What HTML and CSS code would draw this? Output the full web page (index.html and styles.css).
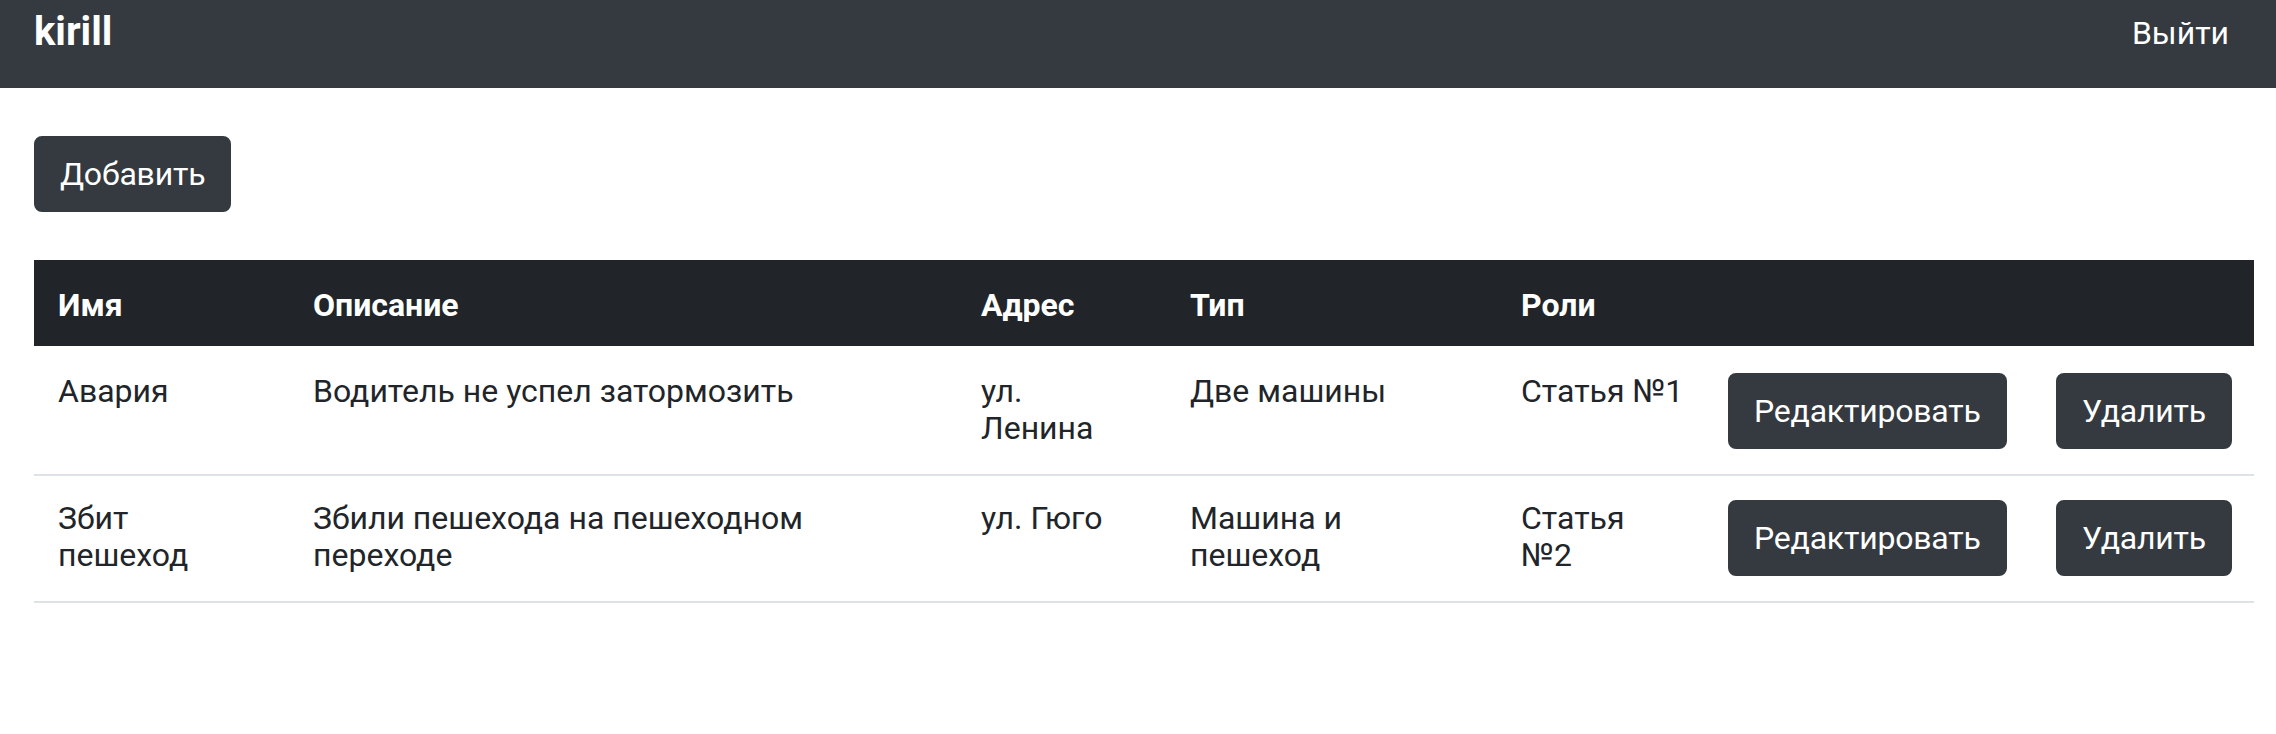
FILE: index.html
```html
<!DOCTYPE html>
<html lang="ru">
<head>
<meta charset="utf-8">
<title>kirill</title>
<link rel="stylesheet" href="styles.css">
</head>
<body>
<nav class="navbar">
  <a class="brand" href="#">kirill</a>
  <a class="nav-link" href="#">Выйти</a>
</nav>
<main class="content">
  <button class="btn">Добавить</button>
  <table class="table">
    <colgroup>
      <col class="c-name">
      <col class="c-desc">
      <col class="c-addr">
      <col class="c-type">
      <col class="c-role">
      <col class="c-edit">
      <col class="c-del">
    </colgroup>
    <thead>
      <tr>
        <th>Имя</th>
        <th>Описание</th>
        <th>Адрес</th>
        <th>Тип</th>
        <th>Роли</th>
        <th></th>
        <th></th>
      </tr>
    </thead>
    <tbody>
      <tr>
        <td>Авария</td>
        <td>Водитель не успел затормозить</td>
        <td>ул. Ленина</td>
        <td>Две машины</td>
        <td>Статья&nbsp;№1</td>
        <td><button class="btn">Редактировать</button></td>
        <td><button class="btn">Удалить</button></td>
      </tr>
      <tr>
        <td>Збит пешеход</td>
        <td>Збили пешехода на пешеходном переходе</td>
        <td>ул. Гюго</td>
        <td>Машина и пешеход</td>
        <td>Статья №2</td>
        <td><button class="btn">Редактировать</button></td>
        <td><button class="btn">Удалить</button></td>
      </tr>
    </tbody>
  </table>
</main>
</body>
</html>
```
FILE: styles.css
```css
* { box-sizing: border-box; }

html, body {
  margin: 0;
  padding: 0;
  background: #fff;
}

body {
  font-family: Roboto, "Liberation Sans", sans-serif;
  font-size: 32px;
  color: #212529;
}

.navbar {
  height: 88px;
  background: #343a40;
  display: flex;
  justify-content: space-between;
  align-items: flex-start;
  padding: 0 34px;
}

.brand {
  font-weight: 700;
  font-size: 40px;
  line-height: 60px;
  padding-top: 2px;
  color: #fff;
  text-decoration: none;
}

.nav-link {
  font-size: 32px;
  line-height: 48px;
  margin-top: 9px;
  padding: 0 13px 0 16px;
  color: #fff;
  text-decoration: none;
}

.content {
  padding: 48px 22px 0 34px;
}

.btn {
  display: inline-block;
  font-family: Roboto, "Liberation Sans", sans-serif;
  font-size: 32px;
  line-height: 48px;
  letter-spacing: -0.2px;
  padding: 12px 24px;
  border: 2px solid #343a40;
  border-radius: 8px;
  background: #343a40;
  color: #fff;
  cursor: pointer;
  vertical-align: top;
  margin: 0;
}

.table {
  margin-top: 48px;
  width: 2220px;
  table-layout: fixed;
  border-collapse: collapse;
  border-spacing: 0;
}

.c-name { width: 255px; }
.c-desc { width: 668px; }
.c-addr { width: 209px; }
.c-type { width: 331px; }
.c-role { width: 207px; }
.c-edit { width: 328px; }
.c-del { width: 222px; }

.table th {
  background: #212529;
  color: #fff;
  font-weight: 700;
  text-align: left;
  line-height: 37px;
  padding: 27px 24px 22px;
}

.table td {
  line-height: 37px;
  padding: 24px 24px 25px;
  vertical-align: top;
  border-bottom: 2px solid #dee2e6;
}

.table tbody tr:first-child td {
  padding-top: 27px;
}
```
